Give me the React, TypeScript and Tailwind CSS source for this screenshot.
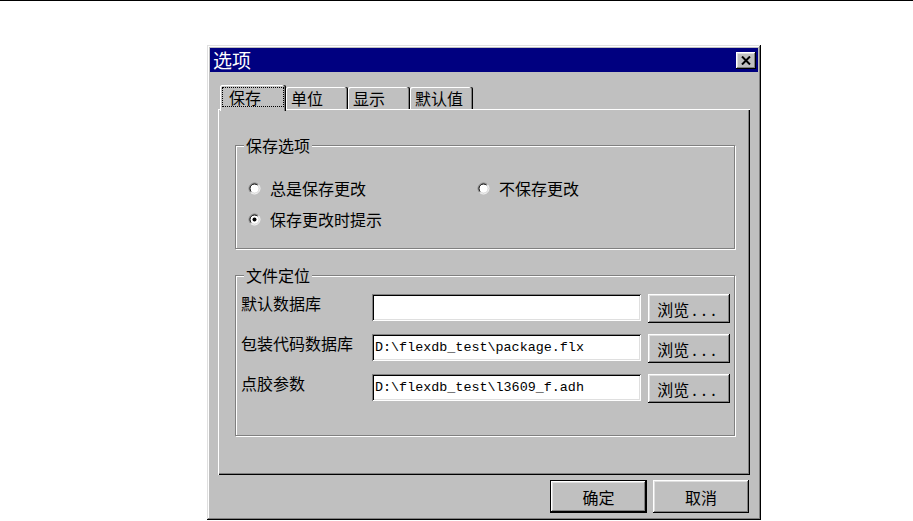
import React from "react";

const raised =
  "shadow-[inset_-1px_-1px_0_#000,inset_1px_1px_0_#fff,inset_-2px_-2px_0_#808080,inset_2px_2px_0_#dfdfdf]";
const sunken =
  "shadow-[inset_1px_1px_0_#808080,inset_-1px_-1px_0_#fff,inset_2px_2px_0_#000,inset_-2px_-2px_0_#dfdfdf]";

function Radio({ checked }: { checked?: boolean }) {
  return (
    <svg width="13" height="13" viewBox="0 0 13 13" className="shrink-0">
      <circle cx="6.5" cy="6.5" r="4.5" fill="#fff" />
      <path d="M2.611 10.389 A5.5 5.5 0 0 1 10.389 2.611" stroke="#808080" fill="none" />
      <path d="M10.389 2.611 A5.5 5.5 0 0 1 2.611 10.389" stroke="#fff" fill="none" />
      <path d="M3.318 9.682 A4.5 4.5 0 0 1 9.682 3.318" stroke="#000" fill="none" />
      <path d="M9.682 3.318 A4.5 4.5 0 0 1 3.318 9.682" stroke="#dfdfdf" fill="none" />
      {checked && <circle cx="6.5" cy="6.5" r="2" fill="#000" />}
    </svg>
  );
}

function RadioItem({ label, checked, className }: { label: string; checked?: boolean; className?: string }) {
  return (
    <div className={"flex items-center h-[20px] gap-[9px] " + (className ?? "")}>
      <Radio checked={checked} />
      <span className="text-[16px] leading-[18px]">{label}</span>
    </div>
  );
}

function Tab({ label, w }: { label: string; w: string }) {
  return (
    <div
      className={
        "h-[22px] rounded-t-[2px] flex items-center pl-[5px] text-[16px] leading-[18px] shadow-[inset_-1px_0_0_#000,inset_-2px_0_0_#808080,inset_1px_1px_0_#fff] " +
        w
      }
    >
      {label}
    </div>
  );
}

function FileRow({ label, value }: { label: string; value: string }) {
  return (
    <div className="flex items-start h-[29px]">
      <div className="w-[131px] text-[16px] leading-[18px]">{label}</div>
      <div className={"w-[269px] h-[27px] bg-white flex items-center pl-[3px] pt-[1px] " + sunken}>
        <span className="font-['Liberation_Mono',monospace] text-[13.4px] leading-[16px] whitespace-pre">
          {value}
        </span>
      </div>
      <button
        className={
          "ml-[7px] w-[82px] h-[29px] bg-[#c0c0c0] flex items-center justify-center text-[16px] leading-[18px] " +
          raised
        }
      >
        浏览<span className="tracking-[5px] pl-[3px]">...</span>
      </button>
    </div>
  );
}

export default function App() {
  return (
    <div className="w-[913px] h-[521px] bg-white border-t border-black font-['Noto_Sans_CJK_SC',sans-serif] text-black overflow-hidden">
      <div className="ml-[207px] mt-[44px] w-[554px] h-[475px] bg-[#c0c0c0] p-[3px] flex flex-col shadow-[inset_-1px_-1px_0_#000,inset_1px_1px_0_#dfdfdf,inset_-2px_-2px_0_#808080,inset_2px_2px_0_#fff]">
        {/* Title bar */}
        <div className="h-[24px] bg-[#000080] flex items-center justify-between pl-[3px] pr-[2px]">
          <span className="text-white text-[19px] leading-[24px]">选项</span>
          <button className={"w-[20px] h-[17px] bg-[#c0c0c0] flex items-center justify-center " + raised}>
            <svg width="10" height="9" viewBox="0 0 10 9">
              <path d="M1 0.5 L9 8.5 M9 0.5 L1 8.5" stroke="#000" strokeWidth="2" />
            </svg>
          </button>
        </div>

        <div className="px-[8px] pt-[13px] flex flex-col">
          {/* Tabs */}
          <div className="h-[24px] flex items-end pl-[2px] relative z-10">
            <div className="w-[66px] h-[26px] -mb-[2px] bg-[#c0c0c0] rounded-t-[2px] p-[2px] pb-[4px] shadow-[inset_-1px_0_0_#000,inset_-2px_0_0_#808080,inset_1px_1px_0_#fff]">
              <div className="h-full border border-dotted border-black flex items-center pl-[6px] text-[16px] leading-[18px]">
                保存
              </div>
            </div>
            <Tab label="单位" w="w-[62px]" />
            <Tab label="显示" w="w-[62px]" />
            <Tab label="默认值" w="w-[63px]" />
          </div>

          {/* Tab page */}
          <div className="h-[366px] pt-[36px] pl-[17px] flex flex-col shadow-[inset_1px_1px_0_#fff,inset_-1px_-1px_0_#000,inset_-2px_-2px_0_#808080]">
            {/* Group 1 */}
            <div className="relative w-[500px] h-[104px] border border-[#808080] shadow-[inset_1px_1px_0_#fff,1px_1px_0_#fff] pt-[32px] pl-[12px] flex flex-col gap-[11px]">
              <span className="absolute top-[-9px] left-[8px] px-[2px] bg-[#c0c0c0] text-[16px] leading-[16px]">
                保存选项
              </span>
              <div className="flex">
                <RadioItem label="总是保存更改" className="w-[229px]" />
                <RadioItem label="不保存更改" />
              </div>
              <RadioItem label="保存更改时提示" checked />
            </div>

            {/* Group 2 */}
            <div className="relative mt-[26px] w-[500px] h-[161px] border border-[#808080] shadow-[inset_1px_1px_0_#fff,1px_1px_0_#fff] pt-[18px] pl-[5px] flex flex-col gap-[11px]">
              <span className="absolute top-[-9px] left-[8px] px-[2px] bg-[#c0c0c0] text-[16px] leading-[16px]">
                文件定位
              </span>
              <FileRow label="默认数据库" value="" />
              <FileRow label="包装代码数据库" value="D:\flexdb_test\package.flx" />
              <FileRow label="点胶参数" value="D:\flexdb_test\l3609_f.adh" />
            </div>
          </div>

          {/* Bottom buttons */}
          <div className="flex justify-end gap-[6px] pt-[5px] pr-[1px]">
            <button className="w-[97px] h-[33px] border border-black bg-[#c0c0c0] p-0">
              <div className={"w-full h-full flex items-center justify-center text-[16px] leading-[18px] " + raised}>
                确定
              </div>
            </button>
            <button
              className={
                "w-[96px] h-[33px] bg-[#c0c0c0] flex items-center justify-center text-[16px] leading-[18px] " + raised
              }
            >
              取消
            </button>
          </div>
        </div>
      </div>
    </div>
  );
}
